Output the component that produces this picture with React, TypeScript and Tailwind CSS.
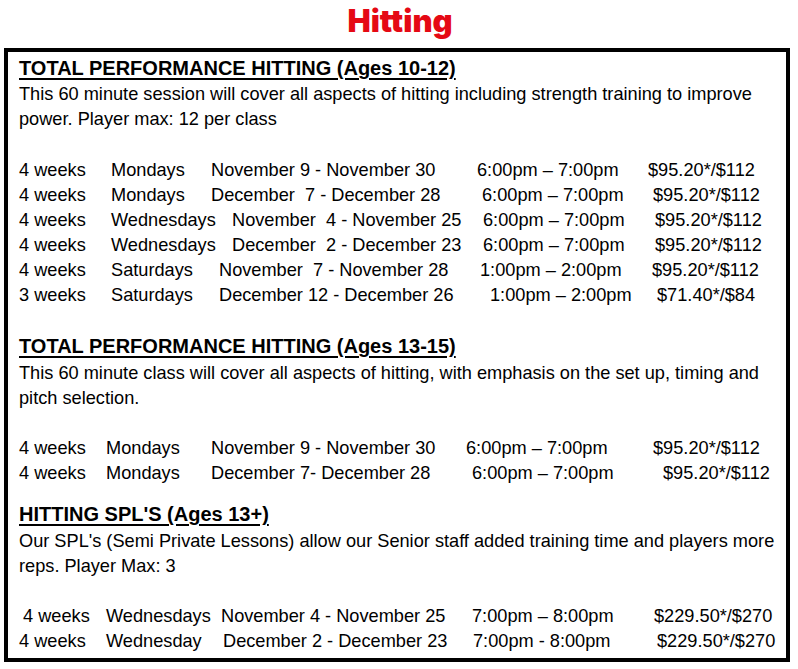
type Row = { cells: string[]; widths: string[]; indent?: string };

const groupOne: Row[] = [
  {
    cells: ["4 weeks", "Mondays", "November 9 - November 30", "6:00pm – 7:00pm", "$95.20*/$112"],
    widths: ["w-[92px]", "w-[100px]", "w-[266px]", "w-[171px]"],
  },
  {
    cells: ["4 weeks", "Mondays", "December  7 - December 28", "6:00pm – 7:00pm", "$95.20*/$112"],
    widths: ["w-[92px]", "w-[100px]", "w-[271px]", "w-[171px]"],
  },
  {
    cells: ["4 weeks", "Wednesdays", "November  4 - November 25", "6:00pm – 7:00pm", "$95.20*/$112"],
    widths: ["w-[92px]", "w-[121px]", "w-[251px]", "w-[172px]"],
  },
  {
    cells: ["4 weeks", "Wednesdays", "December  2 - December 23", "6:00pm – 7:00pm", "$95.20*/$112"],
    widths: ["w-[92px]", "w-[121px]", "w-[251px]", "w-[172px]"],
  },
  {
    cells: ["4 weeks", "Saturdays", "November  7 - November 28", "1:00pm – 2:00pm", "$95.20*/$112"],
    widths: ["w-[92px]", "w-[108px]", "w-[261px]", "w-[172px]"],
  },
  {
    cells: ["3 weeks", "Saturdays", "December 12 - December 26", "1:00pm – 2:00pm", "$71.40*/$84"],
    widths: ["w-[92px]", "w-[108px]", "w-[271px]", "w-[167px]"],
  },
];

const groupTwo: Row[] = [
  {
    cells: ["4 weeks", "Mondays", "November 9 - November 30", "6:00pm – 7:00pm", "$95.20*/$112"],
    widths: ["w-[87px]", "w-[105px]", "w-[255px]", "w-[187px]"],
  },
  {
    cells: ["4 weeks", "Mondays", "December 7- December 28", "6:00pm – 7:00pm", "$95.20*/$112"],
    widths: ["w-[87px]", "w-[105px]", "w-[261px]", "w-[191px]"],
  },
];

const groupThree: Row[] = [
  {
    cells: ["4 weeks", "Wednesdays", "November 4 - November 25", "7:00pm – 8:00pm", "$229.50*/$270"],
    widths: ["w-[83px]", "w-[115px]", "w-[251px]", "w-[182px]"],
    indent: "pl-[4px]",
  },
  {
    cells: ["4 weeks", "Wednesday", "December 2 - December 23", "7:00pm - 8:00pm", "$229.50*/$270"],
    widths: ["w-[87px]", "w-[117px]", "w-[250px]", "w-[184px]"],
  },
];

const Schedule = ({ rows, className }: { rows: Row[]; className?: string }) => (
  <div className={className}>
    {rows.map((row, i) => (
      <div key={i} className={`flex leading-[25px] whitespace-pre ${row.indent ?? ""}`}>
        {row.cells.map((cell, j) => (
          <div key={j} className={`shrink-0 ${row.widths[j] ?? ""}`}>
            {cell}
          </div>
        ))}
      </div>
    ))}
  </div>
);

const Heading = ({ children, className }: { children: string; className?: string }) => (
  <div
    className={`text-[20px] font-bold leading-[27px] underline decoration-2 underline-offset-[3px] ${className ?? ""}`}
  >
    {children}
  </div>
);

export default function App() {
  return (
    <div
      className="w-[798px] h-[669px] bg-white text-black text-[18.2px]"
      style={{ fontFamily: '"Liberation Sans", Arial, sans-serif' }}
    >
      <div className="h-[48px] flex justify-center">
        <div
          className="pl-[2px] pt-[1px] text-[31px] leading-[40px] font-black text-[#e50914]"
          style={{ fontFamily: "Inter, sans-serif" }}
        >
          Hitting
        </div>
      </div>

      <div className="ml-[4px] w-[786px] h-[614px] border-4 border-black pl-[11px] pt-[3px]">
        <Heading>TOTAL PERFORMANCE HITTING (Ages 10-12)</Heading>
        <p className="leading-[25px]">
          This 60 minute session will cover all aspects of hitting including strength training to
          improve power. Player max: 12 per class
        </p>
        <Schedule rows={groupOne} className="mt-[25px] pt-[1px]" />

        <Heading className="mt-[25px]">TOTAL PERFORMANCE HITTING (Ages 13-15)</Heading>
        <p className="mt-[1px] leading-[25px]">
          This 60 minute class will cover all aspects of hitting, with emphasis on the set up,
          timing and pitch selection.
        </p>
        <Schedule rows={groupTwo} className="mt-[25px]" />

        <Heading className="mt-[15px]">HITTING SPL'S (Ages 13+)</Heading>
        <p className="mt-[1px] leading-[25px]">
          Our SPL's (Semi Private Lessons) allow our Senior staff added training time and players
          more reps. Player Max: 3
        </p>
        <Schedule rows={groupThree} className="mt-[25px]" />
      </div>
    </div>
  );
}
